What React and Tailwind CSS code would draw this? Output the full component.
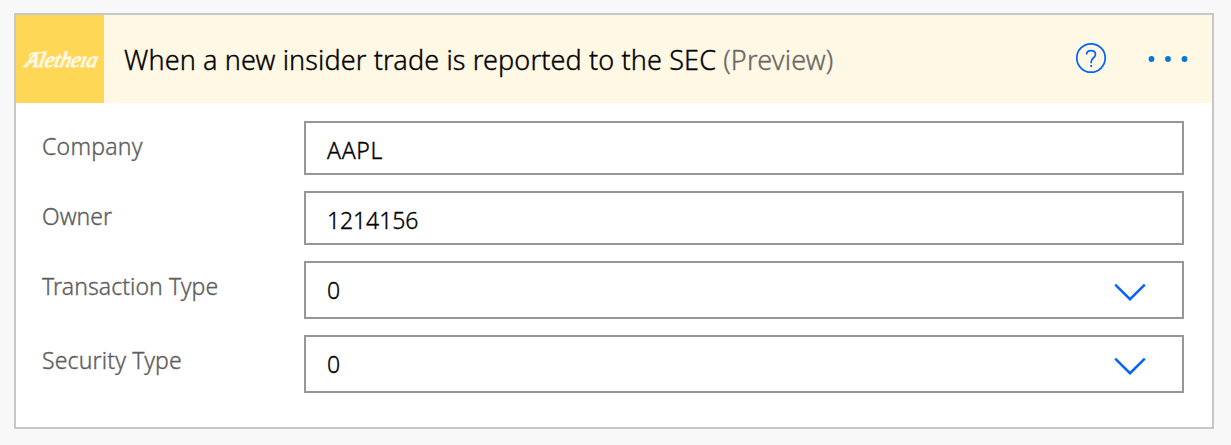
function Chevron() {
  return (
    <svg className="mt-[3px] mr-9 h-5 w-8 shrink-0" viewBox="0 0 32 20" fill="none" stroke="#0062ff" strokeWidth="2.4">
      <path d="M1.2 2.6 L16 17.2 L30.8 2.6" />
    </svg>
  );
}

function Field({ label, value, labelClass, valueClass, select }) {
  return (
    <div className="flex items-start">
      <label className={"w-[262px] shrink-0 pt-[9px] text-[23px] leading-8 whitespace-nowrap text-[#605e5c] " + labelClass}>
        {label}
      </label>
      <div
        className={
          "flex w-[880px] items-center justify-between border-2 border-[#979797] bg-white pl-[21px] text-[23px] text-black " +
          (select ? "h-[58px]" : "h-[54px] pt-1")
        }
      >
        <span className={"leading-8 " + valueClass}>{value}</span>
        {select && <Chevron />}
      </div>
    </div>
  );
}

function Logo() {
  return (
    <div className="relative flex size-[88px] shrink-0 items-center justify-center bg-[#ffd757]">
      <span className="mt-0.5 ml-1 inline-block -skew-x-12 font-['Liberation_Serif',serif] text-[22px] leading-none font-normal tracking-[-0.2px] text-[#fffaea] italic [-webkit-text-stroke:0.6px_#fffaea] [text-shadow:0_0_2px_#fff3c4]">
        Alethe&#305;a
      </span>
      <svg className="absolute top-9 left-2 h-4 w-6" viewBox="0 0 24 16" fill="none" stroke="#fffaea" strokeWidth="1.2" strokeLinecap="round">
        <path d="M5.5 5.5 C5 2.5 9 1.6 20 1.6" />
        <path d="M1 14.6 C5 14.2 8 11 10 8.5" />
      </svg>
    </div>
  );
}

export default function App() {
  return (
    <main className="h-[445px] w-[1231px] overflow-hidden bg-[#f8f8f8] pt-[13px] pl-3.5 font-['Noto_Sans','Open_Sans',sans-serif] font-light [-webkit-text-stroke:0.35px]">
      <section className="h-[416px] w-[1200px] border-2 border-[#c8c8c8] bg-white">
        <header className="flex h-[88px] items-center bg-[#fff8e5]">
          <Logo />
          <h1 className="mt-0.5 ml-5 text-[27px] leading-9 whitespace-nowrap text-black">
            <span className="tracking-[0.13px]">When a new insider trade is reported to the SEC</span>{" "}
            <span className="tracking-[0.2px] text-[#6b6966]">(Preview)</span>
          </h1>
          <svg className="mr-[41px] mb-0.5 ml-auto size-8 shrink-0" viewBox="0 0 32 32" fill="none" stroke="#0062ff">
            <circle cx="16" cy="16" r="14.2" strokeWidth="1.7" />
            <path d="M11.6 12.4 C11.6 9.9 13.5 8.7 16 8.7 C18.7 8.7 20.5 10.3 20.5 12.6 C20.5 15.8 16.2 16.2 16.2 19.6 V21.2" strokeWidth="1.7" />
            <rect x="15.3" y="23" width="1.8" height="2" fill="#0062ff" stroke="none" />
          </svg>
          <svg className="mr-6 h-2 w-10 shrink-0" viewBox="0 0 40 8" fill="#0078d4">
            <circle cx="3.5" cy="4" r="2.9" />
            <circle cx="20" cy="4" r="2.9" />
            <circle cx="36.5" cy="4" r="2.9" />
          </svg>
        </header>
        <div className="flex flex-col gap-4 pt-[18px] pl-[26px]">
          <Field label="Company" value="AAPL" labelClass="tracking-[0.25px]" valueClass="tracking-[0.7px]" />
          <Field label="Owner" value="1214156" labelClass="" valueClass="tracking-[-0.1px]" />
          <Field label="Transaction Type" value="0" labelClass="tracking-[0.06px]" valueClass="" select />
          <Field label="Security Type" value="0" labelClass="tracking-[0.15px]" valueClass="" select />
        </div>
      </section>
    </main>
  );
}
